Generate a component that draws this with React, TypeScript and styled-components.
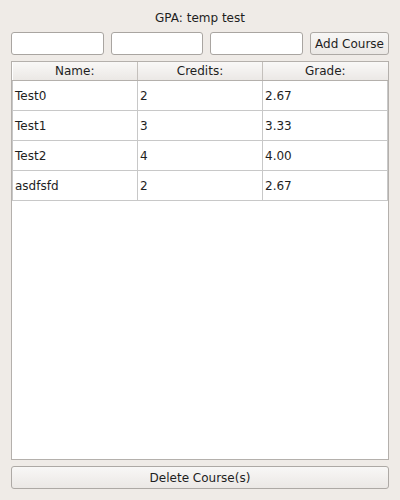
import styled, { createGlobalStyle } from 'styled-components';

const GlobalStyle = createGlobalStyle`
  html, body {
    margin: 0;
    padding: 0;
    background: #efebe7;
  }
  body {
    font-family: 'DejaVu Sans', sans-serif;
    font-size: 12px;
    color: #1e1e1e;
  }
`;

const Window = styled.div`
  width: 400px;
  height: 500px;
  box-sizing: border-box;
  padding: 10px 11px 0 11px;
  display: flex;
  flex-direction: column;
`;

const Title = styled.div`
  text-align: center;
  line-height: 16px;
  height: 16px;
  margin-bottom: 6px;
`;

const InputRow = styled.div`
  display: flex;
  gap: 7px;
  height: 23px;
  margin-bottom: 6px;
`;

const TextInput = styled.input`
  flex: 1;
  min-width: 0;
  height: 23px;
  box-sizing: border-box;
  border: 1px solid #a9a5a1;
  border-radius: 3px;
  background: #fff;
  padding: 0 4px;
  font: inherit;
  outline: none;
`;

const PushButton = styled.button<{ $wide?: boolean }>`
  height: 23px;
  flex: none;
  box-sizing: border-box;
  width: ${(p) => (p.$wide ? '100%' : '79px')};
  border: 1px solid #ada9a5;
  border-radius: 3px;
  background: linear-gradient(#f8f7f6, #ebe8e5);
  font: inherit;
  color: #1e1e1e;
  padding: 0;
`;

const TableFrame = styled.div`
  height: 399px;
  flex: none;
  box-sizing: border-box;
  border: 1px solid #b4b0ac;
  background: #fff;
  margin-bottom: 6px;
`;

const Grid = styled.table`
  border-collapse: collapse;
  table-layout: fixed;
  width: 376px;
`;

const HeadCell = styled.th`
  height: 18px;
  padding: 0;
  font-weight: normal;
  text-align: center;
  background: linear-gradient(#f9f8f7, #ebe8e5);
  border-right: 1px solid #c4c0bc;
  border-bottom: 1px solid #b4b0ac;
  line-height: 17px;
  &:last-child {
    border-right: none;
  }
`;

const Cell = styled.td`
  height: 29px;
  padding: 0 0 0 2px;
  border: 1px solid #c8c8c8;
  border-top: none;
  white-space: nowrap;
  overflow: hidden;
`;

const courses = [
  { name: 'Test0', credits: '2', grade: '2.67' },
  { name: 'Test1', credits: '3', grade: '3.33' },
  { name: 'Test2', credits: '4', grade: '4.00' },
  { name: 'asdfsfd', credits: '2', grade: '2.67' },
];

export default function App() {
  return (
    <>
      <GlobalStyle />
      <Window>
        <Title>GPA: temp test</Title>
        <InputRow>
          <TextInput />
          <TextInput />
          <TextInput />
          <PushButton>Add Course</PushButton>
        </InputRow>
        <TableFrame>
          <Grid>
            <thead>
              <tr>
                <HeadCell>Name:</HeadCell>
                <HeadCell>Credits:</HeadCell>
                <HeadCell>Grade:</HeadCell>
              </tr>
            </thead>
            <tbody>
              {courses.map((c) => (
                <tr key={c.name}>
                  <Cell>{c.name}</Cell>
                  <Cell>{c.credits}</Cell>
                  <Cell>{c.grade}</Cell>
                </tr>
              ))}
            </tbody>
          </Grid>
        </TableFrame>
        <PushButton $wide>Delete Course(s)</PushButton>
      </Window>
    </>
  );
}
